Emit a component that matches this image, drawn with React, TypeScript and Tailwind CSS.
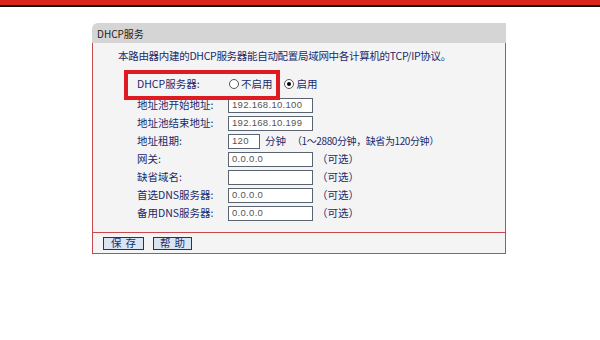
import React from "react";

const font = { fontFamily: '"Noto Sans CJK SC", "Liberation Sans", sans-serif' };
const mono = { fontFamily: '"Liberation Sans", "Noto Sans CJK SC", sans-serif' };

function Input({ value, w = "w-[85px]" }: { value: string; w?: string }) {
  return (
    <div
      className={`${w} h-[15px] bg-white border border-[#5a6470] flex items-center pl-[3px] text-[9.5px] leading-none text-[#555] tracking-[0.3px]`}
      style={mono}
    >
      {value}
    </div>
  );
}

function Row({ label, children }: { label: string; children: React.ReactNode }) {
  return (
    <div className="flex items-center h-[18px]">
      <div className="w-[91px] text-[10.5px] leading-none text-[#1a2a6c]">{label}</div>
      <div className="flex items-center">{children}</div>
    </div>
  );
}

function Radio({ checked }: { checked?: boolean }) {
  return (
    <span className="w-[10px] h-[10px] rounded-full border border-[#555] bg-white flex items-center justify-center">
      {checked ? <span className="w-[4px] h-[4px] rounded-full bg-black" /> : null}
    </span>
  );
}

export default function App() {
  return (
    <div className="w-[600px] h-[340px] bg-white overflow-hidden" style={font}>
      <div className="h-[5px] bg-[#d8261c]" />
      <div className="h-[2px] bg-[#111]" />
      <div className="ml-[92px] mt-[16px] w-[414px]">
        <div className="h-[20px] bg-[#d5d5d5] rounded-tl-[6px] flex items-center pl-[5px] text-[10px] text-[#222]">
          DHCP服务
        </div>
        <div className="h-[189px] bg-[#f4f4f4] border-l border-r border-[#c9484e] pt-[8px]">
          <div className="pl-[25px] text-[10.5px] leading-none text-[#1a2a6c] h-[12px] tracking-[-0.3px]">
            本路由器内建的DHCP服务器能自动配置局域网中各计算机的TCP/IP协议。
          </div>
          <div className="pl-[44px] mt-[9px]">
            <div className="relative flex items-center h-[24px]">
              <div className="absolute left-[-13px] top-[-2px] w-[156px] h-[30px] border-[4px] border-[#e01a22]" />
              <div className="w-[92px] text-[10.5px] leading-none text-[#1a2a6c]">DHCP服务器:</div>
              <div className="flex items-center gap-[2px] text-[10.5px] leading-none text-[#1a2a6c]">
                <Radio />
                <span>不启用</span>
              </div>
              <div className="flex items-center gap-[3px] ml-[11px] text-[10.5px] leading-none text-[#1a2a6c]">
                <Radio checked />
                <span>启用</span>
              </div>
            </div>
            <div>
              <Row label="地址池开始地址:">
                <Input value="192.168.10.100" />
              </Row>
              <Row label="地址池结束地址:">
                <Input value="192.168.10.199" />
              </Row>
              <Row label="地址租期:">
                <Input value="120" w="w-[32px]" />
                <span className="ml-[5px] text-[10.5px] leading-none text-[#1a2a6c]">分钟</span>
                <span className="ml-[6px] text-[10px] leading-none text-[#1a2a6c] tracking-[-0.4px]">（1～2880分钟，缺省为120分钟）</span>
              </Row>
              <Row label="网关:">
                <Input value="0.0.0.0" />
                <span className="ml-[4px] text-[10.5px] leading-none text-[#1a2a6c]">（可选）</span>
              </Row>
              <Row label="缺省域名:">
                <Input value="" />
                <span className="ml-[4px] text-[10.5px] leading-none text-[#1a2a6c]">（可选）</span>
              </Row>
              <Row label="首选DNS服务器:">
                <Input value="0.0.0.0" />
                <span className="ml-[4px] text-[10.5px] leading-none text-[#1a2a6c]">（可选）</span>
              </Row>
              <Row label="备用DNS服务器:">
                <Input value="0.0.0.0" />
                <span className="ml-[4px] text-[10.5px] leading-none text-[#1a2a6c]">（可选）</span>
              </Row>
            </div>
          </div>
        </div>
        <div className="h-[22px] bg-[#f4f4f4] border border-[#c9484e] flex items-center pl-[10px] gap-[9px]">
          <button className="w-[41px] h-[13px] bg-[#d9e5f3] border border-[#333] text-[10.5px] leading-none text-[#1a2a6c] tracking-[4px] pl-[4px] flex items-center justify-center">
            保存
          </button>
          <button className="w-[39px] h-[13px] bg-[#d9e5f3] border border-[#333] text-[10.5px] leading-none text-[#1a2a6c] tracking-[4px] pl-[4px] flex items-center justify-center">
            帮助
          </button>
        </div>
      </div>
    </div>
  );
}
